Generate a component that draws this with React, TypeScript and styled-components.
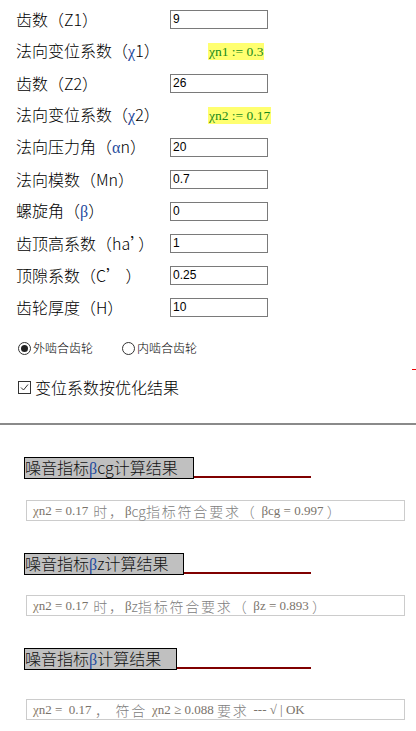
import styled, { createGlobalStyle } from 'styled-components'

const GlobalStyle = createGlobalStyle`
  body {
    margin: 0;
    background: #fff;
    color: #000;
    font-family: "Noto Sans CJK SC", "Liberation Sans", sans-serif;
    font-weight: 300;
  }
`

const Page = styled.div`
  position: relative;
  width: 416px;
  height: 731px;
  overflow: hidden;
`

const Form = styled.div`
  padding: 3px 0 0 16px;
`

const Row = styled.div`
  display: grid;
  grid-template-columns: 154px 1fr;
  align-items: center;
  height: 32px;
`

const Label = styled.span`
  font-size: 16px;
  line-height: 20px;
  white-space: nowrap;
`

const Greek = styled.span`
  font-family: "Liberation Serif", serif;
  font-weight: 400;
  color: #1f4a9e;
`

const Input = styled.input`
  width: 98px;
  height: 19px;
  box-sizing: border-box;
  margin: 0;
  padding: 0 2px;
  border: 1px solid #7a7a7a;
  border-radius: 0;
  outline: none;
  font: 12px "Liberation Sans", Arial, sans-serif;
  color: #000;
`

const Formula = styled.span`
  justify-self: start;
  margin-left: 38px;
  padding: 0 1px;
  background: #ffff70;
  color: #1a8a1a;
  font: 13.5px/17px "Liberation Serif", serif;
  white-space: pre;
`

const Options = styled.div`
  position: relative;
  padding: 15px 0 0 18px;
`

const RadioGroup = styled.div`
  display: flex;
  align-items: center;
  height: 20px;
  gap: 29px;
`

const Choice = styled.label`
  display: flex;
  align-items: center;
  gap: 2px;
  font-size: 12px;
  line-height: 20px;
`

const RadioDot = styled.span<{ $on?: boolean }>`
  display: inline-flex;
  align-items: center;
  justify-content: center;
  width: 13px;
  height: 13px;
  box-sizing: border-box;
  border: 1px solid #333;
  border-radius: 50%;
  &::after {
    content: '';
    width: 7px;
    height: 7px;
    border-radius: 50%;
    background: ${(p) => (p.$on ? '#222' : 'transparent')};
  }
`

const CheckRow = styled.label`
  display: flex;
  align-items: center;
  gap: 4px;
  height: 20px;
  margin-top: 19px;
  font-size: 16px;
`

const CheckBox = styled.span`
  display: inline-flex;
  align-items: center;
  justify-content: center;
  width: 13px;
  height: 13px;
  box-sizing: border-box;
  border: 1px solid #333;
`

const RedDash = styled.span`
  position: absolute;
  right: 0;
  top: 46px;
  width: 4px;
  height: 1px;
  background: #e00;
`

const Divider = styled.hr`
  margin: 26px 0 0;
  border: 0;
  height: 2px;
  background: #8a8a8a;
`

const Results = styled.div`
  padding: 0 0 0 24px;
`

const HeadRow = styled.div`
  display: flex;
  align-items: flex-end;
  width: 287px;
  margin-top: 32px;
`

const HeadBox = styled.div`
  background: #c0c0c0;
  border: 1px solid #000;
  padding: 0 15px 0 0;
  font-size: 16px;
  line-height: 19px;
  color: #111;
  white-space: nowrap;
`

const HeadLine = styled.div`
  flex: 1;
  margin-bottom: 1px;
  border-bottom: 2px solid #800000;
`

const ResultBox = styled.div<{ $gap?: number }>`
  display: flex;
  align-items: center;
  width: 379px;
  height: 21px;
  box-sizing: border-box;
  margin: ${(p) => p.$gap ?? 21}px 0 0 2px;
  padding-left: 6px;
  border: 1px solid #cccccc;
  color: #808080;
  font-size: 14px;
  white-space: pre;
`

const Serif = styled.span`
  font-family: "Liberation Serif", serif;
  font-weight: 400;
  font-size: 13px;
  color: #7a736b;
`

const Cjk = styled.span`
  letter-spacing: 1.8px;
`

const Chi = styled(Serif)`
  color: #8a7a66;
`

const rows: { label: React.ReactNode; value?: string; formula?: string }[] = [
  { label: <>齿数（Z1）</>, value: '9' },
  { label: <>法向变位系数（<Greek>χ</Greek>1）</>, formula: 'χn1 := 0.3' },
  { label: <>齿数（Z2）</>, value: '26' },
  { label: <>法向变位系数（<Greek>χ</Greek>2）</>, formula: 'χn2 := 0.17' },
  { label: <>法向压力角（<Greek>α</Greek>n）</>, value: '20' },
  { label: <>法向模数（Mn）</>, value: '0.7' },
  { label: <>螺旋角（<Greek>β</Greek>）</>, value: '0' },
  { label: <>齿顶高系数（ha’）</>, value: '1' },
  { label: <>顶隙系数（C’ ）</>, value: '0.25' },
  { label: <>齿轮厚度（H）</>, value: '10' },
]

export default function App() {
  return (
    <Page>
      <GlobalStyle />
      <Form>
        {rows.map((r, i) => (
          <Row key={i}>
            <Label>{r.label}</Label>
            {r.formula ? (
              <Formula>{r.formula}</Formula>
            ) : (
              <Input defaultValue={r.value} />
            )}
          </Row>
        ))}
      </Form>

      <Options>
        <RadioGroup>
          <Choice>
            <RadioDot $on />
            外啮合齿轮
          </Choice>
          <Choice>
            <RadioDot />
            内啮合齿轮
          </Choice>
        </RadioGroup>
        <CheckRow>
          <CheckBox>
            <svg width="9" height="9" viewBox="0 0 9 9">
              <path d="M1 4.5 L3.5 7 L8 1.5" fill="none" stroke="#333" strokeWidth="1" />
            </svg>
          </CheckBox>
          变位系数按优化结果
        </CheckRow>
        <RedDash />
      </Options>

      <Divider />

      <Results>
        <HeadRow>
          <HeadBox>
            噪音指标<Greek>β</Greek>cg计算结果
          </HeadBox>
          <HeadLine />
        </HeadRow>
        <ResultBox>
          <Chi>χ</Chi>
          <Serif>n2 = 0.17</Serif>
          <Cjk> 时，</Cjk>
          <Serif>β</Serif>
          <span>cg</span>
          <Cjk>指标符合要求（ </Cjk>
          <Serif>βcg = 0.997 </Serif>
          <Cjk>）</Cjk>
        </ResultBox>

        <HeadRow>
          <HeadBox>
            噪音指标<Greek>β</Greek>z计算结果
          </HeadBox>
          <HeadLine />
        </HeadRow>
        <ResultBox $gap={20}>
          <Chi>χ</Chi>
          <Serif>n2 = 0.17</Serif>
          <Cjk> 时，</Cjk>
          <Serif>β</Serif>
          <span>z</span>
          <Cjk>指标符合要求（ </Cjk>
          <Serif>βz = 0.893 </Serif>
          <Cjk>）</Cjk>
        </ResultBox>

        <HeadRow>
          <HeadBox>
            噪音指标<Greek>β</Greek>计算结果
          </HeadBox>
          <HeadLine />
        </HeadRow>
        <ResultBox $gap={29}>
          <Chi>χ</Chi>
          <Serif>n2 =  0.17 </Serif>
          <Cjk>， 符合 </Cjk>
          <Chi>χ</Chi>
          <Serif>n2 ≥ 0.088 </Serif>
          <Cjk>要求 </Cjk>
          <Serif>--- √ | OK</Serif>
        </ResultBox>
      </Results>
    </Page>
  )
}
